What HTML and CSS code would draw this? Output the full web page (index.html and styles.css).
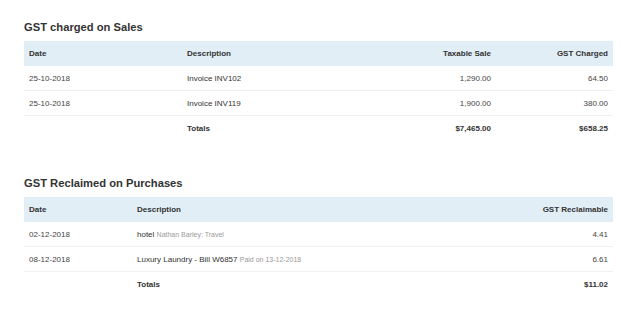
FILE: index.html
```html
<!DOCTYPE html>
<html lang="en">
<head>
<meta charset="utf-8">
<title>GST Report</title>
<link rel="stylesheet" href="styles.css">
</head>
<body>
<div class="page">
  <section class="report report-sales">
    <h2 class="title">GST charged on Sales</h2>
    <div class="grid">
      <div class="row head">
        <div class="cell">Date</div>
        <div class="cell">Description</div>
        <div class="cell num">Taxable Sale</div>
        <div class="cell num">GST Charged</div>
      </div>
      <div class="row">
        <div class="cell date">25-10-2018</div>
        <div class="cell desc">Invoice INV102</div>
        <div class="cell num">1,290.00</div>
        <div class="cell num">64.50</div>
      </div>
      <div class="row">
        <div class="cell date">25-10-2018</div>
        <div class="cell desc">Invoice INV119</div>
        <div class="cell num">1,900.00</div>
        <div class="cell num">380.00</div>
      </div>
      <div class="row total">
        <div class="cell"></div>
        <div class="cell">Totals</div>
        <div class="cell num">$7,465.00</div>
        <div class="cell num">$658.25</div>
      </div>
    </div>
  </section>

  <section class="report report-purchases">
    <h2 class="title">GST Reclaimed on Purchases</h2>
    <div class="grid">
      <div class="row head">
        <div class="cell">Date</div>
        <div class="cell">Description</div>
        <div class="cell num">GST Reclaimable</div>
      </div>
      <div class="row">
        <div class="cell date">02-12-2018</div>
        <div class="cell desc">hotel <span class="sub">Nathan Barley: Travel</span></div>
        <div class="cell num">4.41</div>
      </div>
      <div class="row">
        <div class="cell date">08-12-2018</div>
        <div class="cell desc">Luxury Laundry - Bill W6857 <span class="sub">Paid on 13-12-2018</span></div>
        <div class="cell num">6.61</div>
      </div>
      <div class="row total">
        <div class="cell"></div>
        <div class="cell">Totals</div>
        <div class="cell num">$11.02</div>
      </div>
    </div>
  </section>
</div>
</body>
</html>
```

FILE: styles.css
```css
* {
  box-sizing: border-box;
}

html, body {
  margin: 0;
  padding: 0;
  background: #ffffff;
}

body {
  font-family: "Liberation Sans", Arial, sans-serif;
  color: #444444;
}

.page {
  width: 589px;
  margin-left: 24px;
  padding-top: 20px;
}

.report-purchases {
  margin-top: 35px;
}

.title {
  margin: 0 0 7px 0;
  font-size: 11.2px;
  line-height: 14px;
  font-weight: bold;
  color: #333333;
}

.report-sales .row {
  grid-template-columns: 158px 1fr 120px 117px;
}

.report-purchases .row {
  grid-template-columns: 108px 1fr 140px;
}

.row {
  display: grid;
  align-items: center;
  height: 25px;
  font-size: 8px;
  border-bottom: 1px solid #efefef;
}

.row.head {
  background: #e2eef6;
  border-bottom: none;
  font-weight: bold;
  color: #333333;
}

.row.total {
  border-bottom: none;
  font-weight: bold;
  color: #333333;
}

.cell {
  padding: 0 5px;
  white-space: nowrap;
}

.cell.num {
  text-align: right;
}

.cell.desc {
  color: #333333;
}

.sub {
  font-size: 7px;
  color: #9a9a9a;
}
```
